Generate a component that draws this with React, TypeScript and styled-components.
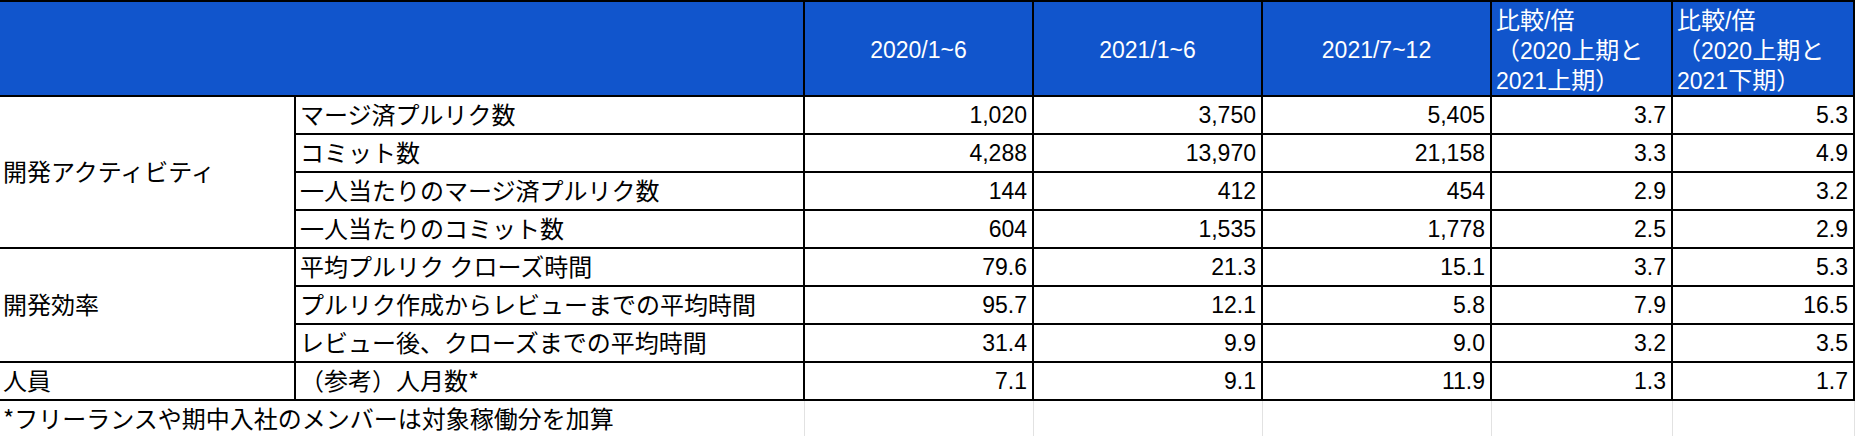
import React from 'react';
import styled, { createGlobalStyle } from 'styled-components';

const GlobalStyle = createGlobalStyle`
  html, body {
    margin: 0;
    padding: 0;
    background: #ffffff;
  }
  body {
    font-family: "Liberation Sans", Arial, "Noto Sans CJK JP", sans-serif;
  }
`

type Row = {
  label: string
  values: string[]
}

type Group = {
  name: string
  rows: Row[]
}

const groups: Group[] = [
  {
    name: '開発アクティビティ',
    rows: [
      { label: 'マージ済プルリク数', values: ['1,020', '3,750', '5,405', '3.7', '5.3'] },
      { label: 'コミット数', values: ['4,288', '13,970', '21,158', '3.3', '4.9'] },
      { label: '一人当たりのマージ済プルリク数', values: ['144', '412', '454', '2.9', '3.2'] },
      { label: '一人当たりのコミット数', values: ['604', '1,535', '1,778', '2.5', '2.9'] },
    ],
  },
  {
    name: '開発効率',
    rows: [
      { label: '平均プルリク クローズ時間', values: ['79.6', '21.3', '15.1', '3.7', '5.3'] },
      { label: 'プルリク作成からレビューまでの平均時間', values: ['95.7', '12.1', '5.8', '7.9', '16.5'] },
      { label: 'レビュー後、クローズまでの平均時間', values: ['31.4', '9.9', '9.0', '3.2', '3.5'] },
    ],
  },
  {
    name: '人員',
    rows: [
      { label: '（参考）人月数*', values: ['7.1', '9.1', '11.9', '1.3', '1.7'] },
    ],
  },
]

const colWidths = [295, 509, 229, 229, 229, 181, 182]

// 比較列の見出し (2行目以降は全角かっこで始まる)
const CompareHead = ({ to }: { to: string }) => (
  <>
    <Jp>比較</Jp>/<Jp>倍</Jp>
    <br />
    <Jp>（</Jp>2020<Jp>上期と</Jp>
    <br />
    2021<Jp>{to}）</Jp>
  </>
)

const App = () => {
  return (
    <>
      <GlobalStyle />
      <Sheet>
        <colgroup>
          {colWidths.map((w, i) => (
            <col key={i} style={{ width: w }} />
          ))}
        </colgroup>
        <thead>
          <HeadRow>
            <HeadCell colSpan={2} />
            <HeadCell $center>2020/1~6</HeadCell>
            <HeadCell $center>2021/1~6</HeadCell>
            <HeadCell $center>2021/7~12</HeadCell>
            <HeadCell>
              <CompareHead to="上期" />
            </HeadCell>
            <HeadCell>
              <CompareHead to="下期" />
            </HeadCell>
          </HeadRow>
        </thead>
        <tbody>
          {groups.map((g) =>
            g.rows.map((r, i) => (
              <BodyRow key={g.name + i}>
                {i === 0 && (
                  <GroupCell rowSpan={g.rows.length}>
                    <Jp>{g.name}</Jp>
                  </GroupCell>
                )}
                <LabelCell>
                  <Jp>{r.label}</Jp>
                </LabelCell>
                {r.values.map((v, j) => (
                  <NumCell key={j}>{v}</NumCell>
                ))}
              </BodyRow>
            ))
          )}
          <NoteRow>
            <NoteCell colSpan={2}>
              <Jp>*フリーランスや期中入社のメンバーは対象稼働分を加算</Jp>
            </NoteCell>
            {[0, 1, 2, 3, 4].map((i) => (
              <EmptyCell key={i} />
            ))}
          </NoteRow>
        </tbody>
      </Sheet>
    </>
  );
}

const Jp = styled.span`
  font-family: "Noto Sans CJK JP", "Liberation Sans", sans-serif;
  font-size: 24px;
`
const Sheet = styled.table`
  width: 1854px;
  table-layout: fixed;
  border-collapse: collapse;
  font-size: 23px;
  color: #000000;
`
const HeadRow = styled.tr`
  height: 94px;
`
const HeadCell = styled.th<{ $center?: boolean }>`
  background: #1155cc;
  color: #ffffff;
  font-weight: normal;
  text-align: ${(p) => (p.$center ? 'center' : 'left')};
  vertical-align: middle;
  line-height: 28px;
  padding: 3px 4px 0;
  border: 2px solid #000000;
  border-left: none;
  white-space: nowrap;
  overflow: hidden;
`
const BodyRow = styled.tr`
  height: 38px;
`
const Cell = styled.td`
  border: 2px solid #000000;
  padding: 0 5px;
  vertical-align: middle;
  white-space: nowrap;
  overflow: hidden;
  line-height: 28px;
`
const GroupCell = styled(Cell)`
  border-left: none;
  padding-left: 3px;
`
const LabelCell = styled(Cell)`
  padding-left: 4px;
`
const NumCell = styled(Cell)`
  text-align: right;
`
const NoteRow = styled.tr`
  height: 37px;
`
const NoteCell = styled.td`
  padding: 0 3px;
  white-space: nowrap;
  vertical-align: middle;
  line-height: 28px;
  border-right: 1px solid #e2e2e2;
`
const EmptyCell = styled.td`
  border-left: 1px solid #e2e2e2;
  border-right: 1px solid #e2e2e2;
`

export default App;
